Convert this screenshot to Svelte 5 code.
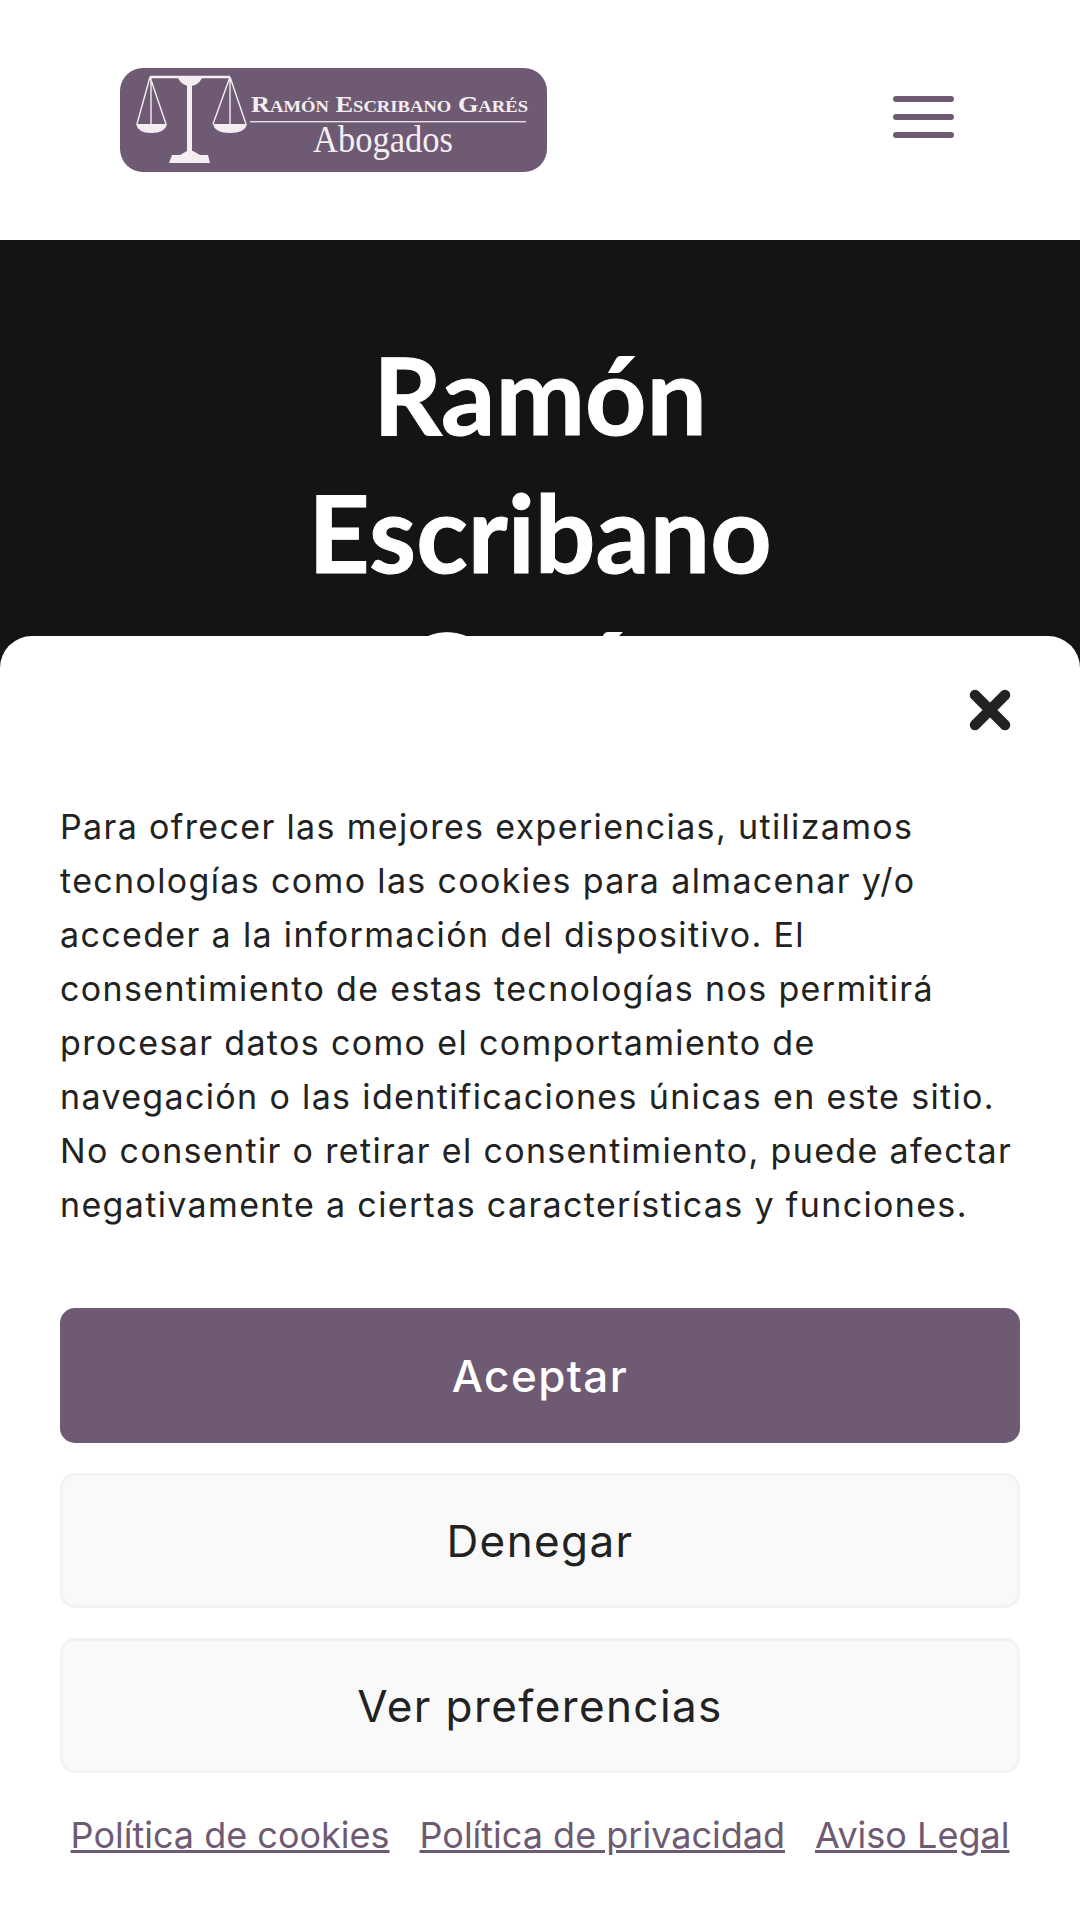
<script>
  const links = ["Política de cookies", "Política de privacidad", "Aviso Legal"];
</script>

<header class="top">
  <svg class="logo" viewBox="0 0 427 104" role="img" aria-label="Ramón Escribano Garés Abogados">
    <rect width="427" height="104" rx="23" fill="#6e5a72" />
    <g fill="none" stroke="#f4eef3" stroke-width="1.4">
      <path d="M30 9H110" stroke-width="2.6" />
      <path d="M30 9 17 56M30 9 46 56M31 9V56" />
      <path d="M110 9 93 56M110 9 126 56M110 9V56" />
    </g>
    <g fill="#f4eef3">
      <path d="M58 10H82Q78 18 70 18Q62 18 58 10Z" />
      <rect x="67" y="16" width="5" height="68" />
      <path d="M16 56H47Q45 65 31 65Q18 65 16 56Z" />
      <path d="M93 56H127Q125 65 110 65Q95 65 93 56Z" />
      <path d="M49 95 52 87H60L67 83H73L80 87H88L90 95Z" />
    </g>
    <text x="131" y="44" class="logo-name" textLength="277" lengthAdjust="spacingAndGlyphs">Ramón Escribano Garés</text>
    <rect x="130" y="53" width="276" height="1.4" fill="#e6dde5" />
    <text x="193" y="84" class="logo-sub" textLength="140" lengthAdjust="spacingAndGlyphs">Abogados</text>
  </svg>
  <button class="burger" aria-label="Menú"><span></span><span></span><span></span></button>
</header>

<section class="hero">
  <h1>Ramón Escribano Garés</h1>
</section>

<div class="modal">
  <button class="close" aria-label="Cerrar">
    <svg viewBox="0 0 42 42" width="42" height="42">
      <path d="M6 6 36 36M36 6 6 36" stroke="#222" stroke-width="10.5" stroke-linecap="round" fill="none" />
    </svg>
  </button>
  <p>Para ofrecer las mejores experiencias, utilizamos tecnologías como las cookies para almacenar y/o acceder a la información del dispositivo. El consentimiento de estas tecnologías nos permitirá procesar datos como el comportamiento de navegación o las identificaciones únicas en este sitio. No consentir o retirar el consentimiento, puede afectar negativamente a ciertas características y funciones.</p>
  <div class="actions">
    <button class="btn primary">Aceptar</button>
    <button class="btn">Denegar</button>
    <button class="btn">Ver preferencias</button>
  </div>
  <nav class="legal">
    {#each links as link}
      <a href="#top">{link}</a>
    {/each}
  </nav>
</div>

<style>
  :global(body) {
    margin: 0;
    background: #141414;
    height: 1920px;
    overflow: hidden;
  }

  .top {
    height: 240px;
    background: #fff;
    display: flex;
    align-items: center;
    justify-content: space-between;
    padding: 0 126px 0 120px;
    box-sizing: border-box;
  }

  .logo {
    width: 427px;
    height: 104px;
    display: block;
  }

  .logo-name {
    font-family: "Liberation Serif", serif;
    font-size: 24px;
    font-variant: small-caps;
    font-weight: 700;
    fill: #f4eef3;
  }

  .logo-sub {
    font-family: "Liberation Serif", serif;
    font-size: 38px;
    fill: #f4eef3;
  }

  .burger {
    width: 61px;
    margin-bottom: 6px;
    padding: 0;
    border: 0;
    background: none;
    display: flex;
    flex-direction: column;
    gap: 12px;
  }

  .burger span {
    display: block;
    height: 6px;
    border-radius: 3px;
    background: #6e5a72;
  }

  .hero {
    background: #141414;
    padding: 85px 270px 0;
  }

  h1 {
    margin: 0;
    font-family: Lato, sans-serif;
    font-weight: 700;
    font-size: 107px;
    line-height: 138px;
    color: #fff;
    text-align: center;
    -webkit-text-stroke: 1px #fff;
  }

  .modal {
    position: fixed;
    left: 0;
    right: 0;
    bottom: 0;
    height: 1284px;
    box-sizing: border-box;
    background: #fff;
    border-radius: 32px 32px 0 0;
    padding: 164px 60px 0;
    font-family: Inter, sans-serif;
    color: #222;
  }

  .close {
    position: absolute;
    top: 53px;
    right: 69px;
    padding: 0;
    border: 0;
    background: none;
    line-height: 0;
  }

  p {
    margin: 0;
    font-size: 34px;
    line-height: 54px;
    letter-spacing: 1.35px;
  }

  .actions {
    margin-top: 76px;
    display: flex;
    flex-direction: column;
    gap: 30px;
  }

  .btn {
    height: 135px;
    border: 3px solid #f3f3f3;
    border-radius: 15px;
    background: #f9f9f9;
    color: #222;
    font-family: inherit;
    font-size: 44px;
    letter-spacing: 1.4px;
  }

  .primary {
    border-color: #6e5a72;
    background: #6e5a72;
    color: #fff;
    font-weight: 500;
  }

  .legal {
    margin-top: 39px;
    display: flex;
    justify-content: center;
    gap: 30px;
  }

  .legal a {
    color: #6e5a72;
    font-size: 36px;
    line-height: 46px;
  }
</style>
